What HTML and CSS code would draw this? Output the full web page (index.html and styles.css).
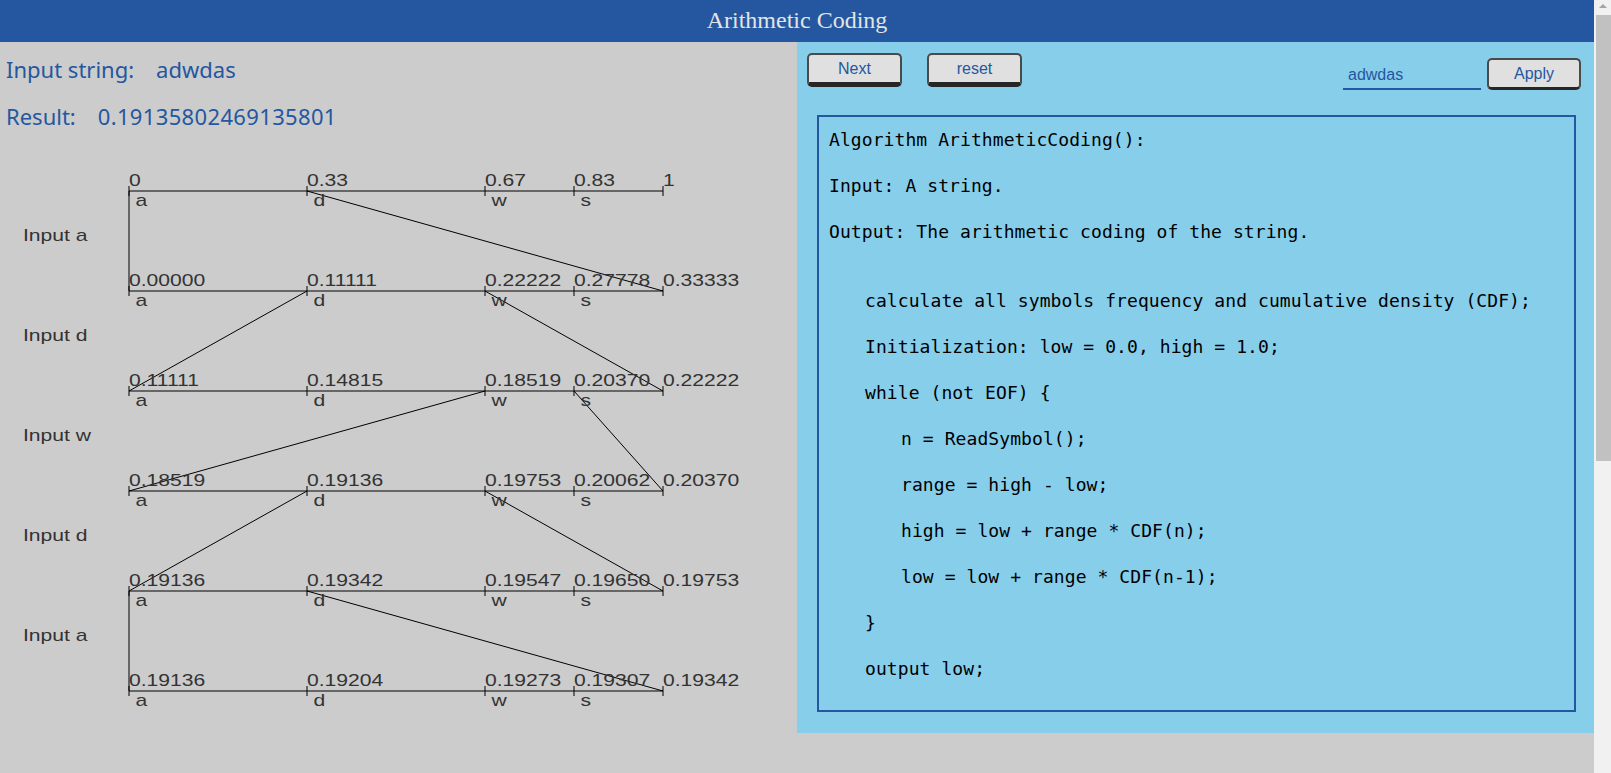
FILE: index.html
```html
<!DOCTYPE html>
<html>
<head>
<meta charset="utf-8">
<title>Arithmetic Coding</title>
<link rel="stylesheet" href="styles.css">
</head>
<body>
<div class="page">
  <div class="content">
    <header class="topbar">Arithmetic Coding</header>
    <main class="layout">
      <section class="left">
        <div class="info">
          <p class="info-line">Input string:<span class="value value-str">adwdas</span></p>
          <p class="info-line">Result:<span class="value value-res">0.19135802469135801</span></p>
        </div>
        <svg class="diagram" width="797" height="600" viewBox="0 0 797 600">
          <g class="axes">
            <line x1="129" y1="51" x2="663" y2="51"/>
            <line x1="129" y1="151" x2="663" y2="151"/>
            <line x1="129" y1="251" x2="663" y2="251"/>
            <line x1="129" y1="351" x2="663" y2="351"/>
            <line x1="129" y1="451" x2="663" y2="451"/>
            <line x1="129" y1="551" x2="663" y2="551"/>
            <path d="M129 46V56M307 46V56M485 46V56M574 46V56M663 46V56
                     M129 146V156M307 146V156M485 146V156M574 146V156M663 146V156
                     M129 246V256M307 246V256M485 246V256M574 246V256M663 246V256
                     M129 346V356M307 346V356M485 346V356M574 346V356M663 346V356
                     M129 446V456M307 446V456M485 446V456M574 446V456M663 446V456
                     M129 546V556M307 546V556M485 546V556M574 546V556M663 546V556"/>
            <line x1="129" y1="51" x2="129" y2="151"/>
            <line x1="307" y1="51" x2="663" y2="151"/>
            <line x1="307" y1="151" x2="129" y2="251"/>
            <line x1="485" y1="151" x2="663" y2="251"/>
            <line x1="485" y1="251" x2="129" y2="351"/>
            <line x1="574" y1="251" x2="663" y2="351"/>
            <line x1="307" y1="351" x2="129" y2="451"/>
            <line x1="485" y1="351" x2="663" y2="451"/>
            <line x1="129" y1="451" x2="129" y2="551"/>
            <line x1="307" y1="451" x2="663" y2="551"/>
          </g>
          <g class="labels">
            <text transform="translate(23 101) scale(1.32 1)">Input a</text>
            <text transform="translate(23 201) scale(1.32 1)">Input d</text>
            <text transform="translate(23 301) scale(1.32 1)">Input w</text>
            <text transform="translate(23 401) scale(1.32 1)">Input d</text>
            <text transform="translate(23 501) scale(1.32 1)">Input a</text>

            <text transform="translate(129 46) scale(1.32 1)">0</text>
            <text transform="translate(307 46) scale(1.32 1)">0.33</text>
            <text transform="translate(485 46) scale(1.32 1)">0.67</text>
            <text transform="translate(574 46) scale(1.32 1)">0.83</text>
            <text transform="translate(663 46) scale(1.32 1)">1</text>

            <text transform="translate(129 146) scale(1.32 1)">0.00000</text>
            <text transform="translate(307 146) scale(1.32 1)">0.11111</text>
            <text transform="translate(485 146) scale(1.32 1)">0.22222</text>
            <text transform="translate(574 146) scale(1.32 1)">0.27778</text>
            <text transform="translate(663 146) scale(1.32 1)">0.33333</text>

            <text transform="translate(129 246) scale(1.32 1)">0.11111</text>
            <text transform="translate(307 246) scale(1.32 1)">0.14815</text>
            <text transform="translate(485 246) scale(1.32 1)">0.18519</text>
            <text transform="translate(574 246) scale(1.32 1)">0.20370</text>
            <text transform="translate(663 246) scale(1.32 1)">0.22222</text>

            <text transform="translate(129 346) scale(1.32 1)">0.18519</text>
            <text transform="translate(307 346) scale(1.32 1)">0.19136</text>
            <text transform="translate(485 346) scale(1.32 1)">0.19753</text>
            <text transform="translate(574 346) scale(1.32 1)">0.20062</text>
            <text transform="translate(663 346) scale(1.32 1)">0.20370</text>

            <text transform="translate(129 446) scale(1.32 1)">0.19136</text>
            <text transform="translate(307 446) scale(1.32 1)">0.19342</text>
            <text transform="translate(485 446) scale(1.32 1)">0.19547</text>
            <text transform="translate(574 446) scale(1.32 1)">0.19650</text>
            <text transform="translate(663 446) scale(1.32 1)">0.19753</text>

            <text transform="translate(129 546) scale(1.32 1)">0.19136</text>
            <text transform="translate(307 546) scale(1.32 1)">0.19204</text>
            <text transform="translate(485 546) scale(1.32 1)">0.19273</text>
            <text transform="translate(574 546) scale(1.32 1)">0.19307</text>
            <text transform="translate(663 546) scale(1.32 1)">0.19342</text>

            <text transform="translate(135.5 66) scale(1.32 1)">a</text>
            <text transform="translate(313.5 66) scale(1.32 1)">d</text>
            <text transform="translate(491.5 66) scale(1.32 1)">w</text>
            <text transform="translate(580.5 66) scale(1.32 1)">s</text>
            <text transform="translate(135.5 166) scale(1.32 1)">a</text>
            <text transform="translate(313.5 166) scale(1.32 1)">d</text>
            <text transform="translate(491.5 166) scale(1.32 1)">w</text>
            <text transform="translate(580.5 166) scale(1.32 1)">s</text>
            <text transform="translate(135.5 266) scale(1.32 1)">a</text>
            <text transform="translate(313.5 266) scale(1.32 1)">d</text>
            <text transform="translate(491.5 266) scale(1.32 1)">w</text>
            <text transform="translate(580.5 266) scale(1.32 1)">s</text>
            <text transform="translate(135.5 366) scale(1.32 1)">a</text>
            <text transform="translate(313.5 366) scale(1.32 1)">d</text>
            <text transform="translate(491.5 366) scale(1.32 1)">w</text>
            <text transform="translate(580.5 366) scale(1.32 1)">s</text>
            <text transform="translate(135.5 466) scale(1.32 1)">a</text>
            <text transform="translate(313.5 466) scale(1.32 1)">d</text>
            <text transform="translate(491.5 466) scale(1.32 1)">w</text>
            <text transform="translate(580.5 466) scale(1.32 1)">s</text>
            <text transform="translate(135.5 566) scale(1.32 1)">a</text>
            <text transform="translate(313.5 566) scale(1.32 1)">d</text>
            <text transform="translate(491.5 566) scale(1.32 1)">w</text>
            <text transform="translate(580.5 566) scale(1.32 1)">s</text>
          </g>
        </svg>
      </section>
      <section class="right">
        <div class="toolbar">
          <button class="btn btn-main">Next</button>
          <button class="btn btn-main btn-reset">reset</button>
          <div class="apply-group">
            <input class="str-input" type="text" value="adwdas">
            <button class="btn btn-apply">Apply</button>
          </div>
        </div>
        <div class="code">
          <p class="code-line">Algorithm ArithmeticCoding():</p>
          <p class="code-line">Input: A string.</p>
          <p class="code-line">Output: The arithmetic coding of the string.</p>
          <div class="code-gap"></div>
          <p class="code-line ind1">calculate all symbols frequency and cumulative density (CDF);</p>
          <p class="code-line ind1">Initialization: low = 0.0, high = 1.0;</p>
          <p class="code-line ind1">while (not EOF) {</p>
          <p class="code-line ind2">n = ReadSymbol();</p>
          <p class="code-line ind2">range = high - low;</p>
          <p class="code-line ind2">high = low + range * CDF(n);</p>
          <p class="code-line ind2">low = low + range * CDF(n-1);</p>
          <p class="code-line ind1">}</p>
          <p class="code-line ind1">output low;</p>
        </div>
      </section>
    </main>
  </div>
  <div class="scrollbar" aria-hidden="true">
    <div class="scroll-arrow"><span class="scroll-tri"></span></div>
    <div class="scroll-thumb"></div>
    <div class="scroll-rest"></div>
  </div>
</div>
</body>
</html>
```

FILE: styles.css
```css
html {
  background: #cccccc;
}
body {
  margin: 0;
  background: #cccccc;
  overflow: hidden;
}
.page {
  display: flex;
  height: 100vh;
}
.content {
  flex: 1;
  min-width: 0;
}
.scrollbar {
  width: 17px;
  flex-shrink: 0;
  background: #f1f1f1;
  display: flex;
  flex-direction: column;
}
.scroll-arrow {
  height: 15px;
  display: flex;
  justify-content: center;
  padding-top: 4px;
  box-sizing: border-box;
}
.scroll-tri {
  width: 0;
  height: 0;
  border-left: 4px solid transparent;
  border-right: 4px solid transparent;
  border-bottom: 4px solid #a3a3a3;
}
.scroll-thumb {
  height: 446px;
  margin-left: 2px;
  background: #c1c1c1;
}
.scroll-rest {
  flex: 1;
}
.topbar {
  height: 42px;
  background: #2457a0;
  color: #e4e4e4;
  font-family: "Liberation Serif", serif;
  font-size: 24px;
  line-height: 41px;
  text-align: center;
}
.layout {
  display: grid;
  grid-template-columns: 1fr 1fr;
  align-items: start;
}
.left {
  display: flex;
  flex-direction: column;
}
.info {
  padding: 12px 0 0 6px;
  display: flex;
  flex-direction: column;
  gap: 17px;
}
.info-line {
  margin: 0;
  font-family: "Noto Sans", sans-serif;
  font-size: 22px;
  line-height: 30px;
  color: #2457a0;
}
.value-str {
  margin-left: 22px;
}
.value-res {
  margin-left: 22px;
  letter-spacing: 0.35px;
}
.diagram {
  display: block;
  margin-top: 9px;
}
.axes line,
.axes path {
  stroke: #000;
  stroke-width: 1;
  fill: none;
}
.labels text {
  font-family: "Liberation Sans", Arial, sans-serif;
  font-size: 16px;
  fill: #333333;
}
.right {
  background: #87ceeb;
  padding-bottom: 21px;
}
.toolbar {
  height: 73px;
  box-sizing: border-box;
  padding: 11px 13px 0 10px;
  display: flex;
  align-items: flex-start;
}
.btn {
  font-family: "Liberation Sans", Arial, sans-serif;
  font-size: 16px;
  color: #2457a0;
  background: #e0e0e0;
  border: 2px solid #4a4a4a;
  border-radius: 5px;
  padding: 0;
  box-sizing: border-box;
}
.btn-main {
  width: 95px;
  height: 34px;
  border-bottom: 5px solid #262626;
}
.btn-reset {
  margin-left: 25px;
}
.apply-group {
  margin-left: auto;
  margin-top: 5px;
  display: flex;
  align-items: flex-start;
  gap: 6px;
}
.str-input {
  width: 138px;
  height: 29px;
  box-sizing: border-box;
  margin-top: 3px;
  border: none;
  border-bottom: 2px solid #2457a0;
  background: transparent;
  padding: 0 0 0 5px;
  font-family: "Liberation Sans", Arial, sans-serif;
  font-size: 16px;
  color: #2457a0;
  outline: none;
}
.btn-apply {
  width: 94px;
  height: 32px;
  border-bottom: 3px solid #262626;
}
.code {
  margin: 0 18px 0 20px;
  border: 2px solid #2457a0;
  padding: 0 10px 18px 10px;
}
.code-line {
  margin: 0;
  font-family: "DejaVu Sans Mono", monospace;
  font-size: 18px;
  letter-spacing: 0.08px;
  line-height: 46px;
  color: #000;
  white-space: pre;
}
.code-gap {
  height: 23px;
}
.ind1 {
  padding-left: 36px;
}
.ind2 {
  padding-left: 72px;
}
```
